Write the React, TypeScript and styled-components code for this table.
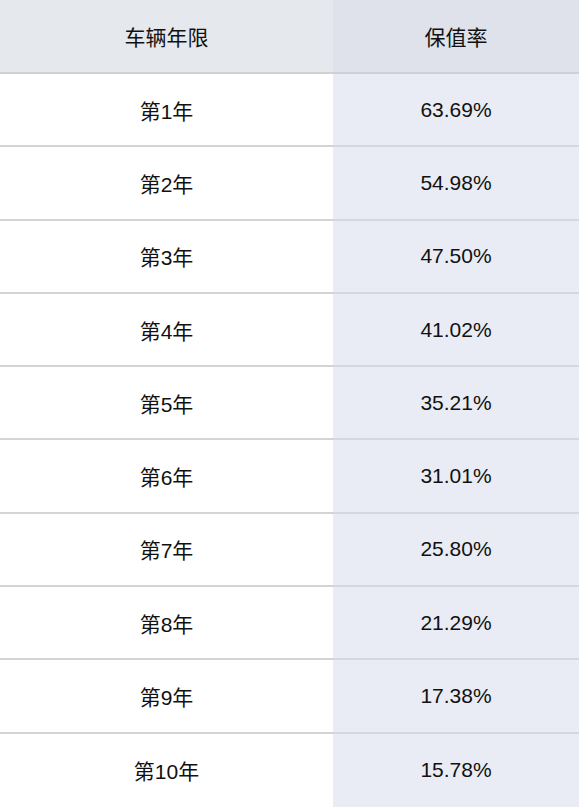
import React from "react";
import styled, { createGlobalStyle } from "styled-components";

const Global = createGlobalStyle`
  html, body { margin: 0; padding: 0; background: #ffffff; }
  body { font-family: "Liberation Sans", Arial, "Noto Sans CJK SC", sans-serif; }
`;

const Table = styled.div`
  width: 579px;
  display: grid;
  grid-template-columns: 333px 246px;
  color: #111111;
  font-size: 21px;
`;

const HeadCell = styled.div<{ $alt?: boolean }>`
  height: 72px;
  display: flex;
  align-items: center;
  justify-content: center;
  background: ${(p) => (p.$alt ? "#dfe2ea" : "#e5e8ec")};
  border-bottom: 2px solid ${(p) => (p.$alt ? "#ccd0da" : "#cfd1d4")};
  box-sizing: border-box;
  height: 74px;
`;

const Cell = styled.div<{ $alt?: boolean; $last?: boolean }>`
  height: 73.3px;
  display: flex;
  align-items: center;
  justify-content: center;
  box-sizing: border-box;
  background: ${(p) => (p.$alt ? "#e9ecf4" : "#ffffff")};
  border-bottom: ${(p) =>
    p.$last ? "none" : `2px solid ${p.$alt ? "#d3d7e2" : "#d4d4d4"}`};
`;

const rows: [string, string][] = [
  ["第1年", "63.69%"],
  ["第2年", "54.98%"],
  ["第3年", "47.50%"],
  ["第4年", "41.02%"],
  ["第5年", "35.21%"],
  ["第6年", "31.01%"],
  ["第7年", "25.80%"],
  ["第8年", "21.29%"],
  ["第9年", "17.38%"],
  ["第10年", "15.78%"],
];

export default function App() {
  return (
    <>
      <Global />
      <Table>
        <HeadCell>车辆年限</HeadCell>
        <HeadCell $alt>保值率</HeadCell>
        {rows.map(([y, v], i) => (
          <React.Fragment key={y}>
            <Cell $last={i === rows.length - 1}>{y}</Cell>
            <Cell $alt $last={i === rows.length - 1}>{v}</Cell>
          </React.Fragment>
        ))}
      </Table>
    </>
  );
}
